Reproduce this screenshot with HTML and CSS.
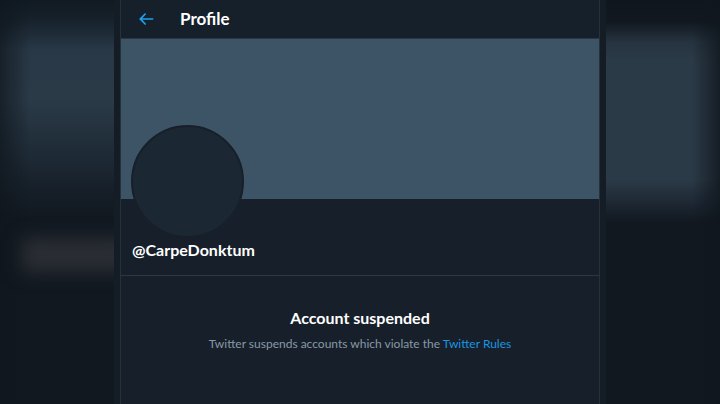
FILE: index.html
```html
<!DOCTYPE html>
<html lang="en">
<head>
<meta charset="utf-8">
<title>Profile</title>
<link rel="stylesheet" href="styles.css">
</head>
<body>
<div class="page">
  <div class="side side-left"><div class="blob"></div></div>
  <div class="stripe"></div>
  <main class="column">
    <header class="topbar">
      <svg class="back" viewBox="0 0 24 24" width="20" height="20" aria-hidden="true"><path d="M20 11H7.414l4.293-4.293a1 1 0 0 0-1.414-1.414l-6 6a1 1 0 0 0 0 1.414l6 6a.996.996 0 0 0 1.414 0 1 1 0 0 0 0-1.414L7.414 13H20a1 1 0 1 0 0-2z"/></svg>
      <h1 class="title">Profile</h1>
    </header>
    <div class="banner"></div>
    <section class="profile">
      <div class="avatar"></div>
      <div class="handle">@CarpeDonktum</div>
    </section>
    <section class="notice">
      <h2 class="notice-title">Account suspended</h2>
      <p class="notice-text">Twitter suspends accounts which violate the <a href="#" class="link">Twitter Rules</a></p>
    </section>
  </main>
  <div class="stripe"></div>
  <div class="side side-right"></div>
</div>
</body>
</html>
```
FILE: styles.css
```css
* { box-sizing: border-box; }
html, body { margin: 0; padding: 0; }
body {
  width: 720px;
  height: 404px;
  overflow: hidden;
  background: #111820;
  font-family: Lato, "Open Sans", sans-serif;
}
.page {
  display: flex;
  height: 404px;
}
.side {
  flex: 0 0 114px;
  height: 404px;
  overflow: hidden;
}
.side-left {
  width: 114px;
  background:
    linear-gradient(90deg, rgba(15,22,29,0.7) 0, rgba(15,22,29,0) 30px),
    linear-gradient(180deg, #111a22 0, #16212b 20px, #283846 50px, #2a3a47 100px, #1f2c38 150px, #141c25 200px, #111820 220px);
  position: relative;
}
.side-left .blob {
  position: absolute;
  left: 22px;
  top: 238px;
  width: 110px;
  height: 34px;
  background: #2b2e34;
  filter: blur(9px);
}
.side-right {
  flex: 0 0 114px;
  background:
    linear-gradient(270deg, rgba(15,22,29,0.8) 0, rgba(15,22,29,0) 28px),
    linear-gradient(180deg, #10161e 0, #111820 22px, #26333f 42px, #2b3a47 60px, #2b3a47 180px, #1c2631 205px, #111820 222px);
}
.stripe {
  flex: 0 0 6px;
  background: #141c25;
}
.column {
  flex: 0 0 480px;
  background: #17202a;
  border-left: 1px solid #26313c;
  border-right: 1px solid #26313c;
  display: flex;
  flex-direction: column;
}
.topbar {
  height: 39px;
  display: flex;
  align-items: center;
  padding-left: 15px;
  background: #15202b;
  border-bottom: 1px solid #2b3744;
}
.back {
  fill: #1da1f2;
  flex: 0 0 auto;
}
.title {
  margin: 0 0 0 24px;
  font-size: 17px;
  font-weight: 700;
  color: #ffffff;
  line-height: 20px;
}
.banner {
  height: 160px;
  background: #3d5466;
}
.profile {
  height: 77px;
  padding: 0 0 0 10px;
  border-bottom: 1px solid #2b3744;
}
.avatar {
  width: 113px;
  height: 113px;
  margin-top: -74px;
  border-radius: 50%;
  background: #1b2733;
  border: 2px solid #17202a;
}
.handle {
  margin: 2px 0 0 1px;
  font-size: 16px;
  font-weight: 700;
  color: #ffffff;
  line-height: 20px;
}
.notice {
  flex: 1;
  text-align: center;
  padding-top: 31px;
}
.notice-title {
  margin: 0;
  font-size: 16px;
  font-weight: 700;
  color: #ffffff;
  line-height: 22px;
}
.notice-text {
  margin: 6px 0 0;
  font-size: 12px;
  color: #8899a6;
  line-height: 18px;
}
.link {
  color: #1b95e0;
  text-decoration: none;
}
```
